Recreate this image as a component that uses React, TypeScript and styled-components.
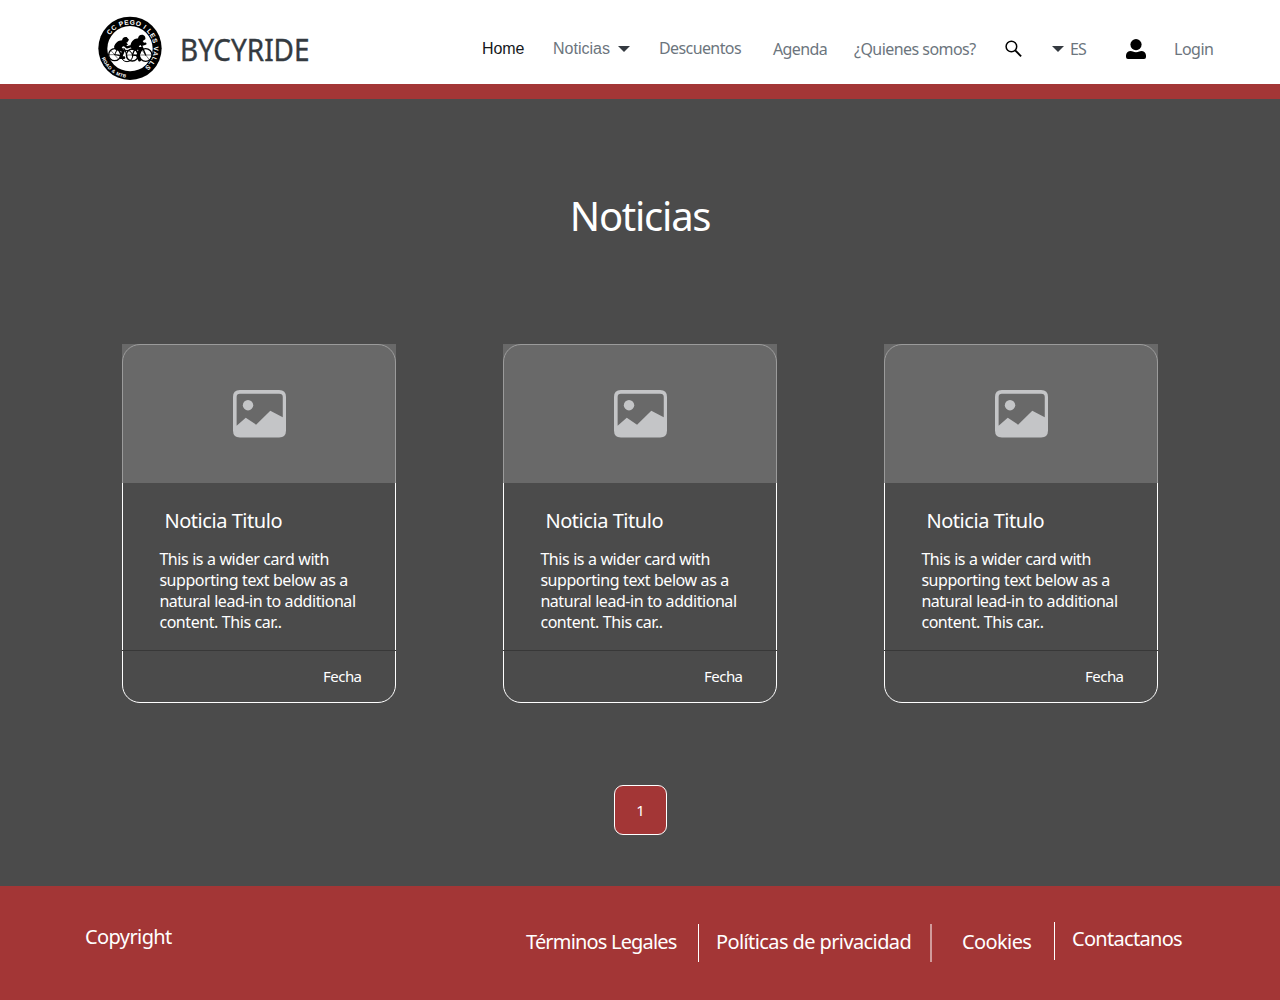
import React from "react";
import styled, { createGlobalStyle } from "styled-components";

const GlobalStyle = createGlobalStyle`
  *, *::before, *::after { box-sizing: border-box; }
  body { margin: 0; background: #4b4b4b; }
  h1, h2, p { margin: 0; font-weight: 400; }
  a { color: inherit; text-decoration: none; }
  svg { display: block; flex: none; }
`;

const Page = styled.div`
  width: 1280px;
  height: 1000px;
  display: flex;
  flex-direction: column;
  overflow: hidden;
  color: #fff;
  background: #4b4b4b;
  font-family: "Segoe UI", "Noto Sans", sans-serif;
`;

const Header = styled.header`
  height: 99px;
  flex: none;
  display: flex;
  align-items: flex-start;
  background: #fff;
  border-bottom: 15px solid #a33636;
`;

const Brand = styled.a`
  display: flex;
  width: 392px;
  padding: 10px 0 0 90px;
`;

const BrandName = styled.span`
  margin: 15px 0 0 10px;
  font-size: 31px;
  line-height: 48px;
  transform: scaleX(0.9);
  transform-origin: left;
  color: #343a40;
  -webkit-text-stroke: 0.4px #343a40;
`;

const Nav = styled.nav`
  display: flex;
  align-items: flex-start;
  margin-left: 90px;
`;

const NavLink = styled.a<{ $w: number; $top?: number; $track?: number; $gap?: number; $active?: boolean; $arial?: boolean }>`
  display: flex;
  gap: ${(p) => p.$gap ?? 8}px;
  width: ${(p) => p.$w}px;
  margin-top: ${(p) => p.$top ?? 37}px;
  font-family: ${(p) => (p.$arial ? '"Liberation Sans", Arial, sans-serif' : "inherit")};
  font-size: 16px;
  line-height: 24px;
  white-space: nowrap;
  letter-spacing: ${(p) => p.$track ?? 0}px;
  color: ${(p) => (p.$active ? "#16181b" : "#6c757d")};
`;

const Caret = styled.i`
  width: 0;
  height: 0;
  margin-top: 9px;
  border: 6px solid transparent;
  border-top-color: #343a40;
  border-bottom: 0;
`;

const Main = styled.main`
  height: 787px;
  flex: none;
  display: flex;
  flex-direction: column;
  align-items: center;
`;

const Title = styled.h1`
  margin-top: 90px;
  font-size: 40px;
  line-height: 54px;
  letter-spacing: -1.25px;
`;

const Cards = styled.section`
  margin-top: 101px;
  width: 1036px;
  display: flex;
  justify-content: space-between;
`;

const Card = styled.article`
  width: 274px;
  height: 359px;
  border: 1px solid #fff;
  border-radius: 18px;
`;

const Thumb = styled.div`
  height: 139px;
  margin: -1px -1px 0;
  display: flex;
  justify-content: center;
  padding: 46px 0 0 1px;
  background: rgba(117, 117, 117, 0.72);
`;

const CardBody = styled.div`
  height: 167px;
  padding: 24px 0 0 36.4px;
`;

const CardTitle = styled.h2`
  padding-left: 5px;
  font-size: 20px;
  line-height: 28px;
  letter-spacing: -0.45px;
`;

const CardText = styled.p`
  margin-top: 14px;
  font-size: 16px;
  line-height: 21px;
  letter-spacing: -0.44px;
  word-spacing: 0.2px;
  white-space: pre;
`;

const CardFooter = styled.footer`
  margin: 0 -1px;
  padding: 14px 34.5px 0 0;
  border-top: 1px solid #383838;
  font-size: 15px;
  line-height: 22px;
  letter-spacing: -0.55px;
  text-align: right;
`;

const PageButton = styled.button`
  margin-top: 82px;
  width: 53px;
  height: 50px;
  padding: 0 0 0 1px;
  border: 1px solid #fff;
  border-radius: 9px;
  background: #a33636;
  color: #fff;
  font: 15px "Noto Sans", sans-serif;
`;

const Footer = styled.footer`
  flex: 1;
  display: flex;
  align-items: flex-start;
  background: #a33636;
  padding: 36px 0 0 85px;
  font-size: 20px;
  line-height: 28px;
`;

const FooterLink = styled.a<{ $w: number; $top?: number; $track: number }>`
  width: ${(p) => p.$w}px;
  margin-top: ${(p) => p.$top ?? 0}px;
  letter-spacing: ${(p) => p.$track}px;
  white-space: nowrap;
`;

const Divider = styled.i<{ $gap: number; $top?: number; $soft?: boolean }>`
  width: ${(p) => (p.$soft ? 2 : 1)}px;
  height: 38px;
  margin: ${(p) => p.$top ?? 2}px ${(p) => p.$gap}px 0 0;
  background: ${(p) => (p.$soft ? "#d19b9b" : "#fff")};
`;

function ClubLogo() {
  return (
    <svg width="80" height="76" viewBox="0 0 240 228">
      <defs>
        <path id="ringTop" d="M59.6 75.8 A72 72 0 1 1 152 180" />
        <path id="ringBottom" d="M34 138 A89 89 0 0 0 124 204" />
      </defs>
      <circle cx="120" cy="115" r="95" />
      <circle cx="120" cy="116" r="68" fill="#fff" />
      <g fill="#fff" fontFamily="Liberation Sans, sans-serif" fontWeight="700">
        <text fontSize="20">
          <textPath href="#ringTop" textLength="248">CC PEGO I LES VALLS</textPath>
        </text>
        <text fontSize="14">
          <textPath href="#ringBottom" startOffset="6" textLength="98">ROAD &amp; MTB</textPath>
        </text>
      </g>
      <g fill="none" stroke="#000" strokeWidth="4" strokeLinecap="round" strokeLinejoin="round">
        <circle cx="74" cy="134" r="18" />
        <circle cx="111" cy="138" r="17" strokeWidth="3" />
        <circle cx="127" cy="135" r="18" />
        <circle cx="167" cy="135" r="19" />
        <path d="M74 134 L83 115 L104 117 L95 138 L74 134 M83 115 L95 138 M104 117 L111 138" strokeWidth="3" />
        <path d="M127 135 L136 114 L157 112 L146 137 Z M136 114 L146 137 M153 102 L167 135 M150 103 H163" />
        <path d="M58 134 H88 M64 123 L83 145 M112 135 H140 M150 135 H182 M157 122 L177 148" strokeWidth="1.5" />
        <path d="M84 114 L100 123 L92 143 H102" strokeWidth="8" />
        <path d="M137 112 L151 117 L143 138 L149 150" strokeWidth="9" />
        <path d="M98 101 L111 112 L121 109 M151 94 L157 104 L166 101" strokeWidth="7" />
      </g>
      <path d="M72 112 C75 96 90 87 105 92 L114 104 L97 110 L92 122 L78 121 Z" />
      <path d="M121 108 C124 90 138 82 153 86 L163 100 L148 107 L142 121 L126 120 Z" />
      <path d="M96 93 Q97 79 110 81 L117 89 L111 98 Z" />
      <path d="M144 86 Q145 73 158 74 Q168 78 166 88 L157 94 Z" />
    </svg>
  );
}

function SearchIcon() {
  return (
    <svg width="18" height="18" viewBox="0 0 18 18" fill="none" stroke="#000">
      <circle cx="6.4" cy="6.5" r="5.3" strokeWidth="1.5" />
      <path d="M10.2 10.3 L16.1 16.3" strokeWidth="1.9" />
    </svg>
  );
}

function UserIcon() {
  return (
    <svg width="20" height="20" viewBox="0 0 20 20">
      <circle cx="10" cy="5.6" r="5.6" />
      <path d="M4.8 12 C6 12 7.5 13.2 10 13.2 S14 12 15.2 12 C18 12 20 14 20 16.5 V18 Q20 20 18 20 H2 Q0 20 0 18 V16.5 C0 14 2 12 4.8 12Z" />
    </svg>
  );
}

function PictureIcon() {
  return (
    <svg width="53" height="47.5" viewBox="0 0 54 48" preserveAspectRatio="none" fill="#c4c5c7">
      <path
        fillRule="evenodd"
        d="M7 0 H47 Q54 0 54 7 V41 Q54 48 47 48 H7 Q0 48 0 41 V7 Q0 0 7 0Z M7 3.7 Q3.7 3.7 3.7 7 V36 L13 28 L23.5 35 L38 21 L50.7 27.5 V7 Q50.7 3.7 47 3.7Z"
      />
      <circle cx="15.3" cy="15.3" r="5.3" />
    </svg>
  );
}

const IconSlot = styled.span<{ $top: number; $w: number }>`
  width: ${(p) => p.$w}px;
  margin-top: ${(p) => p.$top}px;
`;

const summary = [
  "This is a wider card with",
  "supporting text below as a",
  "natural lead-in to additional",
  "content. This car..",
].join("\n");

function NewsCard() {
  return (
    <Card>
      <Thumb><PictureIcon /></Thumb>
      <CardBody>
        <CardTitle>Noticia Titulo</CardTitle>
        <CardText>{summary}</CardText>
      </CardBody>
      <CardFooter>Fecha</CardFooter>
    </Card>
  );
}

export default function App() {
  return (
    <Page>
      <GlobalStyle />
      <Header>
        <Brand href="#">
          <ClubLogo />
          <BrandName>BYCYRIDE</BrandName>
        </Brand>
        <Nav>
          <NavLink href="#" $w={71} $active $arial $track={-0.1}>Home</NavLink>
          <NavLink href="#" $w={106} $arial>Noticias<Caret /></NavLink>
          <NavLink href="#" $w={114} $top={36} $track={-0.6}>Descuentos</NavLink>
          <NavLink href="#" $w={81} $track={-0.6}>Agenda</NavLink>
          <NavLink href="#" $w={151} $track={-0.55}>¿Quienes somos?</NavLink>
          <IconSlot $w={47} $top={40}><SearchIcon /></IconSlot>
          <NavLink href="#" $w={74} $gap={6} $track={-0.8}><Caret />ES</NavLink>
          <IconSlot $w={48} $top={39}><UserIcon /></IconSlot>
          <NavLink href="#" $w={60} $track={-0.5}>Login</NavLink>
        </Nav>
      </Header>
      <Main>
        <Title>Noticias</Title>
        <Cards>
          <NewsCard />
          <NewsCard />
          <NewsCard />
        </Cards>
        <PageButton>1</PageButton>
      </Main>
      <Footer>
        <FooterLink as="span" $w={441} $top={1} $track={-0.6}>Copyright</FooterLink>
        <FooterLink href="#" $w={172} $top={6} $track={-0.82}>Términos Legales</FooterLink>
        <Divider $gap={17} />
        <FooterLink href="#" $w={214} $top={6} $track={-0.6}>Políticas de privacidad</FooterLink>
        <Divider $gap={30} $soft />
        <FooterLink href="#" $w={92} $top={6} $track={-0.6}>Cookies</FooterLink>
        <Divider $gap={17} $top={-0.5} />
        <FooterLink href="#" $w={130} $top={3} $track={-0.7}>Contactanos</FooterLink>
      </Footer>
    </Page>
  );
}
